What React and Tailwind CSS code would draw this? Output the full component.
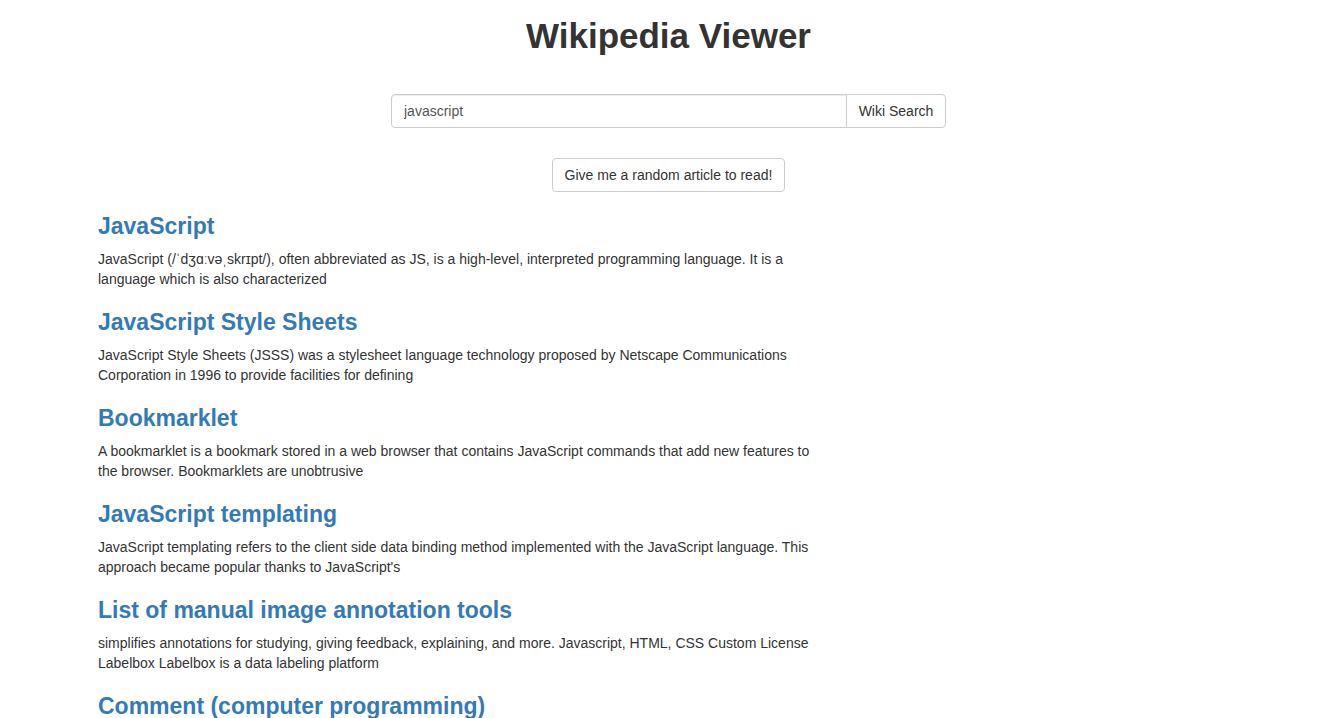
import React from 'react';

const results = [
  {
    title: 'JavaScript',
    text: 'JavaScript (/ˈdʒɑːvəˌskrɪpt/), often abbreviated as JS, is a high-level, interpreted programming language. It is a language which is also characterized',
  },
  {
    title: 'JavaScript Style Sheets',
    text: 'JavaScript Style Sheets (JSSS) was a stylesheet language technology proposed by Netscape Communications Corporation in 1996 to provide facilities for defining',
  },
  {
    title: 'Bookmarklet',
    text: 'A bookmarklet is a bookmark stored in a web browser that contains JavaScript commands that add new features to the browser. Bookmarklets are unobtrusive',
  },
  {
    title: 'JavaScript templating',
    text: "JavaScript templating refers to the client side data binding method implemented with the JavaScript language. This approach became popular thanks to JavaScript's",
  },
  {
    title: 'List of manual image annotation tools',
    text: 'simplifies annotations for studying, giving feedback, explaining, and more. Javascript, HTML, CSS Custom License Labelbox Labelbox is a data labeling platform',
  },
  {
    title: 'Comment (computer programming)',
    text: 'In computer programming, a comment is a programmer-readable explanation or annotation in the source code of a computer program.',
  },
];

export default function App() {
  return (
    <div className="min-h-screen bg-white text-[#333] font-['Liberation_Sans',Arial,sans-serif] text-[14px] leading-[20px]">
      <div className="flex flex-col items-center pl-[4px]">
        <h1 className="mt-[16px] text-[35px] leading-[40px] font-bold">Wikipedia Viewer</h1>

        <div className="mt-[38px] flex w-[555px] h-[34px]">
          <input
            type="text"
            defaultValue="javascript"
            className="flex-1 min-w-0 h-full px-[12px] border border-[#ccc] rounded-l-[4px] text-[14px] text-[#555] outline-none shadow-[inset_0_1px_1px_rgba(0,0,0,0.075)]"
          />
          <button
            type="button"
            className="h-full w-[100px] -ml-px border border-[#ccc] rounded-r-[4px] bg-white text-[14px] text-[#333]"
          >
            Wiki Search
          </button>
        </div>

        <button
          type="button"
          className="mt-[30px] h-[34px] px-[12px] border border-[#ccc] rounded-[4px] bg-white text-[14px] text-[#333]"
        >
          Give me a random article to read!
        </button>
      </div>

      <div className="ml-[98px] w-[730px] mt-[21px]">
        {results.map((r) => (
          <div key={r.title} className="mb-[20px]">
            <h3 className="text-[23px] leading-[26px] font-bold text-[#337ab7]">
              <a href="#">{r.title}</a>
            </h3>
            <p className="mt-[10px]">{r.text}</p>
          </div>
        ))}
      </div>
    </div>
  );
}
